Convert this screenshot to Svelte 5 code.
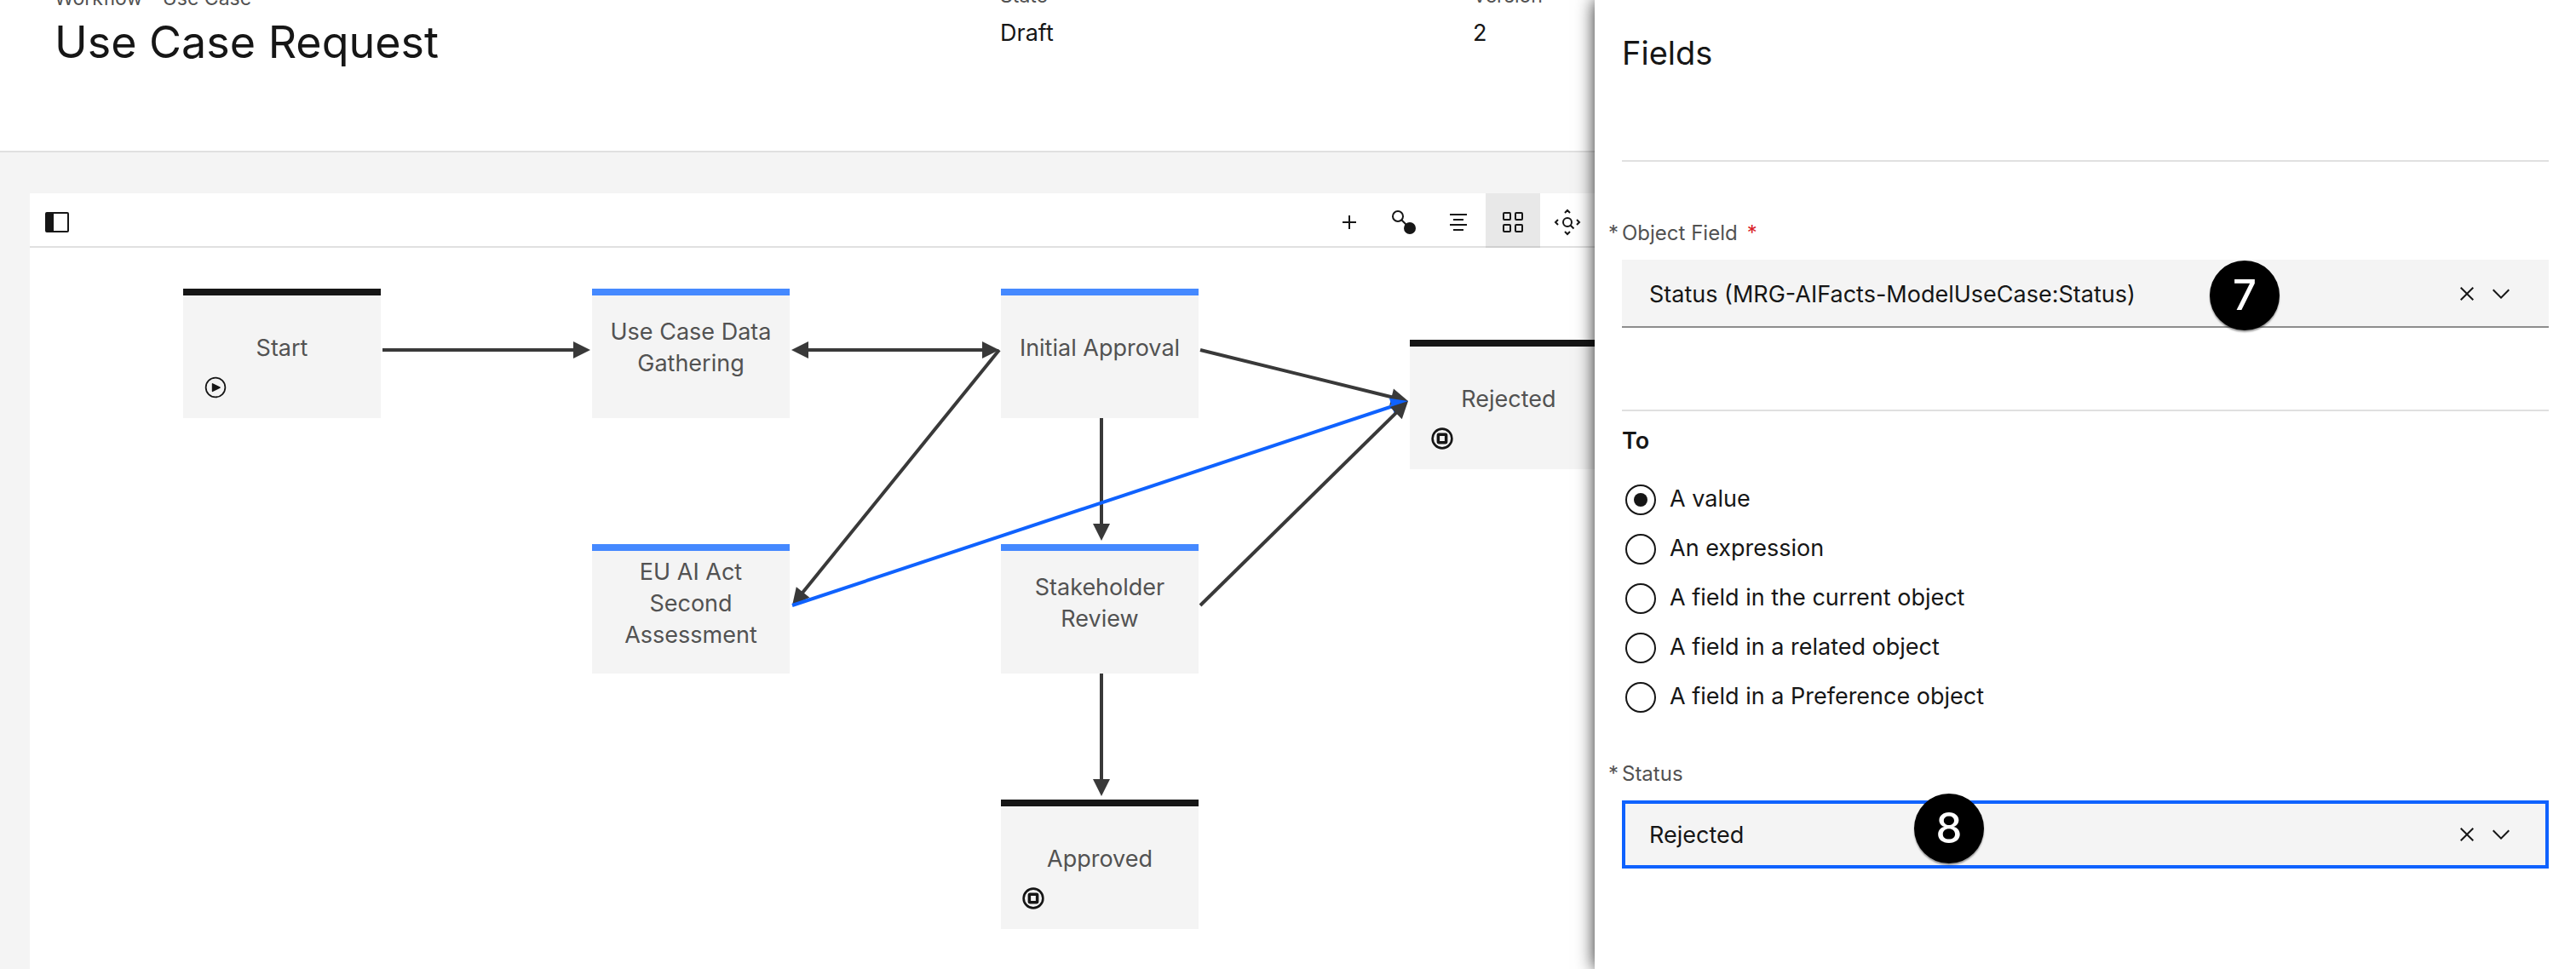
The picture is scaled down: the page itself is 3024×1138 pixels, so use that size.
<script lang="ts">
  type Edge = { from: [number, number]; to: [number, number]; both?: boolean; active?: boolean };

  const nodes = [
    { label: 'Start', x: 180, y: 48, kind: 'start' },
    { label: 'Use Case Data Gathering', x: 660, y: 48, kind: 'task' },
    { label: 'Initial Approval', x: 1140, y: 48, kind: 'task' },
    { label: 'Rejected', x: 1620, y: 108, kind: 'end' },
    { label: 'EU AI Act Second Assessment', x: 660, y: 348, kind: 'task' },
    { label: 'Stakeholder Review', x: 1140, y: 348, kind: 'task' },
    { label: 'Approved', x: 1140, y: 648, kind: 'end' }
  ];

  const edges: Edge[] = [
    { from: [414, 120], to: [658, 120] },
    { from: [894, 120], to: [1138, 120], both: true },
    { from: [1138, 120], to: [895, 420] },
    { from: [1374, 120], to: [1618, 180] },
    { from: [1258, 200], to: [1258, 344] },
    { from: [895, 420], to: [1618, 180], active: true },
    { from: [1374, 420], to: [1618, 180] },
    { from: [1258, 500], to: [1258, 644] }
  ];

  const HEAD = 20;

  // Splits an edge into a shaft that stops at the arrowhead base and its arrowheads.
  function shape({ from, to, both }: Edge) {
    const dx = to[0] - from[0];
    const dy = to[1] - from[1];
    const len = Math.hypot(dx, dy);
    const ux = dx / len;
    const uy = dy / len;
    const head = (x: number, y: number, s: number) => {
      const bx = x - s * ux * HEAD;
      const by = y - s * uy * HEAD;
      const h = HEAD / 2;
      return `${x},${y} ${bx - uy * h},${by + ux * h} ${bx + uy * h},${by - ux * h}`;
    };
    const inset = both ? HEAD - 1 : 0;
    return {
      x1: from[0] + ux * inset,
      y1: from[1] + uy * inset,
      x2: to[0] - ux * (HEAD - 1),
      y2: to[1] - uy * (HEAD - 1),
      heads: both ? [head(to[0], to[1], 1), head(from[0], from[1], -1)] : [head(to[0], to[1], 1)]
    };
  }

  const options = [
    'A value',
    'An expression',
    'A field in the current object',
    'A field in a related object',
    'A field in a Preference object'
  ];
  let target = $state('A value');
  let objectField = $state('Status (MRG-AIFacts-ModelUseCase:Status)');
  let status = $state('Rejected');
</script>

{#snippet fieldIcons(name: string)}
  <button type="button" class="clear" aria-label="Clear {name}">
    <svg viewBox="0 0 32 32"><path d="M24 9.4 22.6 8 16 14.6 9.4 8 8 9.4l6.6 6.6L8 22.6 9.4 24l6.6-6.6 6.6 6.6 1.4-1.4-6.6-6.6z" /></svg>
  </button>
  <svg class="chevron" viewBox="0 0 16 16" aria-hidden="true"><path d="M8 11 3 6l.7-.7L8 9.6l4.3-4.3.7.7z" /></svg>
{/snippet}

<div class="app">
  <main>
    <header>
      <div class="title">
        <p class="meta">Workflow - Use Case</p>
        <h1>Use Case Request</h1>
      </div>
      <div class="detail">
        <p class="meta">State</p>
        <p class="value">Draft</p>
      </div>
      <div class="detail">
        <p class="meta">Version</p>
        <p class="value">2</p>
      </div>
    </header>

    <section class="workspace">
      <div class="toolbar">
        <button type="button" class="tool" aria-label="Toggle side panel">
          <svg viewBox="0 0 32 32"><path d="M28 4H4a2 2 0 0 0-2 2v20a2 2 0 0 0 2 2h24a2 2 0 0 0 2-2V6a2 2 0 0 0-2-2m0 22H12V6h16z" /></svg>
        </button>
        <span class="spacer"></span>
        <button type="button" class="tool" aria-label="Add">
          <svg viewBox="0 0 32 32"><path d="M17 15V8h-2v7H8v2h7v7h2v-7h7v-2z" /></svg>
        </button>
        <button type="button" class="tool" aria-label="Connect">
          <svg viewBox="0 0 32 32"><circle cx="9" cy="9" r="6" class="line" /><path d="m13 13 6 6" class="line" /><circle cx="23" cy="23" r="7" /></svg>
        </button>
        <button type="button" class="tool" aria-label="Align">
          <svg viewBox="0 0 32 32"><path d="M6 6h20v2H6zM10 12h12v2H10zM6 18h20v2H6zM10 24h12v2H10z" /></svg>
        </button>
        <button type="button" class="tool selected" aria-label="Grid view" aria-pressed="true">
          <svg viewBox="0 0 32 32"><g class="line"><rect x="5" y="5" width="8" height="8" rx="1" /><rect x="19" y="5" width="8" height="8" rx="1" /><rect x="5" y="19" width="8" height="8" rx="1" /><rect x="19" y="19" width="8" height="8" rx="1" /></g></svg>
        </button>
        <button type="button" class="tool" aria-label="Zoom to fit">
          <svg viewBox="0 0 32 32"><g class="line"><circle cx="16" cy="16" r="5" /><path d="m19.500 19.500 4 4M13 5l3-3 3 3M13 27l3 3 3-3M5 13l-3 3 3 3M27 13l3 3-3 3" /></g></svg>
        </button>
      </div>

      <div class="canvas">
        {#each nodes as node (node.label)}
          <div class="node {node.kind}" style="left: {node.x}px; top: {node.y}px">
            <span>{node.label}</span>
            {#if node.kind === 'start'}
              <svg class="mark" viewBox="0 0 32 32"><circle cx="16" cy="16" r="13" class="line" /><path d="M11 23a1 1 0 0 1-1-1V10a1 1 0 0 1 1.450-.9l12 6a1 1 0 0 1 0 1.800l-12 6A1 1 0 0 1 11 23" transform="translate(3 3) scale(.82)" /></svg>
            {:else if node.kind === 'end'}
              <svg class="mark" viewBox="0 0 32 32"><circle cx="16" cy="16" r="13" class="line bold" /><rect x="10.700" y="10.700" width="10.600" height="10.600" rx="1" class="line heavy" /></svg>
            {/if}
          </div>
        {/each}
        <svg class="edges" aria-hidden="true">
          {#each edges as edge}
            {@const s = shape(edge)}
            <g class:active={edge.active}>
              <line x1={s.x1} y1={s.y1} x2={s.x2} y2={s.y2} />
              {#each s.heads as points}<polygon {points} />{/each}
            </g>
          {/each}
        </svg>
      </div>
    </section>
  </main>

  <aside>
    <h2>Fields</h2>

    <div class="field first">
      <label for="object-field"><i>*</i>Object Field<b>*</b></label>
      <div class="control">
        <select id="object-field" bind:value={objectField}>
          <option>Status (MRG-AIFacts-ModelUseCase:Status)</option>
        </select>
        {@render fieldIcons('object field')}
        <span class="badge seven">7</span>
      </div>
    </div>

    <fieldset>
      <legend>To</legend>
      {#each options as option}
        <label class="radio">
          <input type="radio" name="target" value={option} bind:group={target} />
          <span>{option}</span>
        </label>
      {/each}
    </fieldset>

    <div class="field">
      <label for="status"><i>*</i>Status</label>
      <div class="control focused">
        <select id="status" bind:value={status}>
          <option>Rejected</option>
          <option>Approved</option>
        </select>
        {@render fieldIcons('status')}
        <span class="badge eight">8</span>
      </div>
    </div>
  </aside>
</div>

<style>
  :global(body) {
    margin: 0;
    overflow: hidden;
  }
  .app {
    display: grid;
    grid-template-columns: minmax(0, 13fr) minmax(0, 8fr);
    min-height: 100vh;
    overflow: hidden;
    font: 400 27px/36px Inter, 'Liberation Sans', sans-serif;
    color: #161616;
    background: #fff;
  }
  p,
  h1,
  h2 {
    margin: 0;
    font-weight: 400;
  }
  svg {
    display: block;
    fill: currentColor;
  }
  button {
    padding: 0;
    border: 0;
    background: none;
    color: inherit;
  }
  .line {
    fill: none;
    stroke: currentColor;
    stroke-width: 2;
  }
  .line.bold {
    stroke-width: 3;
  }
  .line.heavy {
    stroke-width: 4;
  }

  main {
    display: flex;
    flex-direction: column;
    min-width: 0;
    overflow: hidden;
    background: #f4f4f4;
  }
  /* The header is scrolled partly out of view. */
  header {
    display: grid;
    grid-template-columns: 2fr 1fr 143px;
    margin-top: -24px;
    padding: 0 0 95px 64px;
    border-bottom: 2px solid #e0e0e0;
    background: #fff;
  }
  .title {
    display: grid;
    gap: 4px;
    padding-top: 6px;
  }
  .detail {
    display: grid;
    gap: 10px;
    align-content: start;
    padding-top: 3px;
  }
  .meta {
    font-size: 23px;
    line-height: 32px;
    color: #525252;
  }
  h1 {
    font-size: 52px;
    line-height: 64px;
  }

  .workspace {
    display: flex;
    flex: 1;
    flex-direction: column;
    margin: 48px 0 0 35px;
    background: #fff;
  }
  .toolbar {
    display: flex;
    box-shadow: inset 0 -2px #e0e0e0;
  }
  .spacer {
    flex: 1;
  }
  .tool {
    display: grid;
    place-items: center;
    box-sizing: border-box;
    width: 64px;
    height: 64px;
    padding-top: 4px;
  }
  .tool svg {
    width: 32px;
    height: 32px;
  }
  .selected {
    background: #e8e8e8;
    box-shadow: inset 0 -2px #cfcfcf;
  }

  .canvas {
    position: relative;
    flex: 1;
    min-height: 800px;
  }
  .edges {
    position: absolute;
    inset: 0;
    width: 100%;
    height: 100%;
    fill: #393939;
    stroke: #393939;
  }
  .edges line {
    stroke-width: 4;
  }
  .edges polygon {
    stroke: none;
  }
  .edges .active {
    fill: #0f62fe;
    stroke: #0f62fe;
  }
  .node {
    position: absolute;
    box-sizing: border-box;
    display: grid;
    place-items: center;
    width: 232px;
    height: 152px;
    padding: 0 16px 22px;
    border-top: 8px solid #161616;
    background: #f4f4f4;
    color: #525252;
    line-height: 37px;
    text-align: center;
  }
  .task {
    border-color: #4589ff;
  }
  .mark {
    position: absolute;
    left: 24px;
    top: 94px;
    width: 28px;
    height: 28px;
    color: #161616;
  }

  aside {
    position: relative;
    padding: 0 32px;
    background: #fff;
    box-shadow: 0 0 20px rgba(0, 0, 0, 0.85);
  }
  h2 {
    padding: 38px 0 102px;
    border-bottom: 2px solid #e0e0e0;
    font-size: 38px;
    line-height: 48px;
  }
  .field {
    display: grid;
    gap: 15px;
    margin-top: 45px;
  }
  .field.first {
    margin: 68px 0 96px;
  }
  .field label {
    display: flex;
    margin-left: -16px;
    font-size: 24px;
    line-height: 32px;
    color: #525252;
  }
  i {
    width: 16px;
    font-style: normal;
  }
  b {
    margin-left: 11px;
    font-weight: 400;
    color: #da1e28;
  }
  .control {
    position: relative;
    display: flex;
    align-items: center;
    height: 80px;
    background: #f4f4f4;
    box-shadow: inset 0 -2px #8d8d8d;
  }
  .focused {
    box-shadow: inset 0 0 0 4px #0f62fe;
  }
  select {
    flex: 1;
    min-width: 0;
    height: 100%;
    padding: 1px 32px 0;
    border: 0;
    outline: 0;
    appearance: none;
    background: none;
    font: inherit;
    color: inherit;
  }
  .clear {
    width: 32px;
    height: 32px;
  }
  .chevron {
    width: 32px;
    height: 32px;
    margin: 0 40px 0 8px;
    pointer-events: none;
  }
  .badge {
    position: absolute;
    display: grid;
    place-items: center;
    width: 82px;
    height: 82px;
    border-radius: 50%;
    background: #000;
    box-shadow: 0 2px 2px rgba(0, 0, 0, 0.4);
    color: #fff;
    font: 500 49px/82px Inter, 'Liberation Sans', sans-serif;
    pointer-events: none;
  }
  .seven {
    top: 1px;
    left: calc(67% - 39px);
  }
  .eight {
    top: -8px;
    left: calc(35% - 38px);
  }

  fieldset {
    margin: 0;
    padding: 0;
    border: 0;
    border-top: 2px solid #e0e0e0;
  }
  legend {
    float: left;
    width: 100%;
    margin: 17px 0 22px;
    padding: 0;
    font-weight: 600;
  }
  .radio {
    display: flex;
    clear: both;
    align-items: center;
    gap: 16px;
    height: 58px;
    padding-left: 4px;
  }
  .radio span {
    padding-bottom: 2px;
  }
  input {
    display: grid;
    place-items: center;
    width: 36px;
    height: 36px;
    margin: 0;
    border: 2px solid #161616;
    border-radius: 50%;
    appearance: none;
  }
  input:checked::before {
    content: '';
    width: 16px;
    height: 16px;
    border-radius: 50%;
    background: #161616;
  }
</style>
